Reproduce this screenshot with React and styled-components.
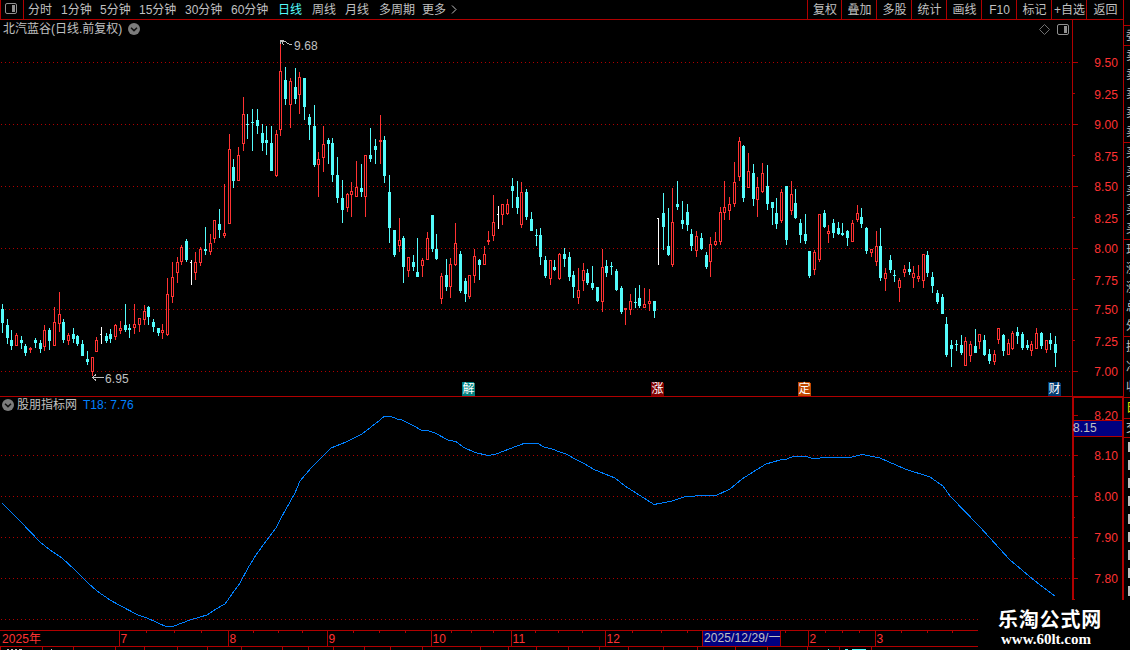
import React from 'react';
import styled, { createGlobalStyle } from 'styled-components';

const RED = '#b00000';
const UP = '#ff3232';
const DOWN = '#54fcfc';
const FONT = '"Liberation Sans", "Noto Sans CJK SC", sans-serif';

const periods = [
    ['分时', 33], ['1分钟', 39], ['5分钟', 39], ['15分钟', 46], ['30分钟', 46], ['60分钟', 47],
    ['日线', 34], ['周线', 33], ['月线', 34], ['多周期', 43], ['更多', 29],
];
const tools = ['复权', '叠加', '多股', '统计', '画线', 'F10', '标记', '+自选', '返回'];

// x, kind (r up, c down, w flat), high, body top, body bottom, low
const candles = [
    [2,'c',304,309,323,333],[7,'c',319,325,338,344],[11,'c',330,340,346,350],[16,'r',333,335,346,346],
    [21,'c',336,340,343,349],[25,'c',344,346,353,356],[30,'r',347,348,350,353],[35,'c',338,340,343,348],
    [40,'c',340,343,349,353],[44,'r',325,330,347,351],[49,'c',328,330,341,350],[54,'r',307,322,346,346],
    [59,'r',292,314,324,332],[63,'c',319,322,340,343],[68,'r',333,335,341,345],[73,'c',328,334,339,343],
    [77,'c',335,336,344,346],[82,'c',340,344,356,356],[87,'c',351,359,362,365],[92,'r',357,357,372,376],
    [96,'r',337,340,352,352],[101,'w',327,334,335,344],[106,'c',333,336,341,343],[110,'c',329,334,339,343],
    [115,'r',324,325,337,340],[120,'r',321,328,331,334],[125,'c',304,325,330,332],[129,'c',324,328,330,338],
    [134,'r',304,324,328,334],[139,'r',318,318,325,332],[144,'r',305,311,320,325],[148,'c',306,307,317,325],
    [153,'c',319,322,327,332],[158,'c',328,328,333,336],[162,'r',324,330,333,339],[167,'r',278,294,335,336],
    [172,'r',262,277,297,303],[177,'r',257,262,273,283],[181,'r',245,247,262,265],[186,'c',239,241,260,262],
    [191,'w',260,262,263,285],[195,'r',252,262,273,280],[200,'r',247,249,263,266],
    [205,'c',227,249,251,255],[210,'r',234,243,252,255],[214,'r',220,220,239,243],[219,'c',209,224,230,238],
    [224,'r',184,233,236,238],[229,'r',134,149,224,224],[233,'c',159,167,181,188],[238,'r',147,155,181,181],
    [243,'r',97,114,144,151],[247,'c',114,124,125,139],[252,'c',109,122,123,151],[257,'c',109,120,126,134],
    [262,'c',124,133,143,151],[266,'c',126,140,143,155],[271,'c',126,143,171,171],[276,'r',130,134,176,177],
    [280,'r',43,71,130,136],[285,'c',67,80,99,105],[290,'r',78,81,105,128],[295,'c',68,87,99,104],
    [299,'r',72,77,95,114],[304,'c',78,78,107,120],[309,'c',114,117,125,140],[314,'c',105,126,165,167],
    [318,'r',152,159,165,197],[323,'r',126,144,158,172],[328,'c',138,140,144,164],[332,'c',138,143,175,182],
    [337,'c',157,175,198,203],[342,'c',180,198,210,223],[347,'r',193,194,208,212],[351,'r',182,191,195,217],
    [356,'r',161,187,197,197],[361,'c',164,188,192,197],[365,'r',155,155,197,217],[370,'c',128,155,159,162],
    [375,'c',139,146,150,164],[380,'r',115,140,142,164],[384,'c',136,140,176,183],[389,'c',175,192,228,243],
    [394,'c',230,230,255,257],[399,'r',218,240,246,252],[403,'c',236,238,267,283],[408,'r',257,257,271,277],
    [413,'c',255,262,267,271],[417,'c',238,272,277,277],[422,'r',258,260,266,277],[427,'r',232,238,260,260],
    [432,'c',215,215,249,252],[436,'c',234,249,259,260],[441,'r',273,276,299,304],[446,'c',259,275,287,291],
    [450,'r',258,264,287,298],[455,'r',223,243,265,266],[460,'c',251,254,291,293],[465,'c',278,281,294,302],
    [469,'r',275,275,297,299],[474,'r',249,256,276,283],[479,'c',259,260,265,280],[484,'r',246,254,265,265],
    [488,'r',231,240,242,245],[493,'r',195,222,236,241],[498,'w',206,214,215,229],[502,'r',204,204,215,225],
    [507,'r',199,204,214,215],[512,'c',178,186,191,208],[517,'c',181,197,208,214],[521,'r',182,192,225,228],
    [526,'c',189,192,217,220],[531,'c',212,219,231,231],[536,'c',229,235,236,246],[540,'c',228,235,257,265],
    [545,'c',256,260,276,278],[550,'r',260,260,279,285],[554,'c',260,267,270,271],[559,'r',253,254,279,280],
    [564,'c',248,254,259,267],[569,'c',252,257,277,281],[573,'c',271,275,287,298],[578,'r',268,290,298,304],
    [583,'r',263,270,281,291],[587,'c',269,273,283,285],[592,'c',266,283,288,290],[597,'c',287,287,301,302],
    [602,'r',249,267,302,312],[606,'c',260,266,273,277],[611,'c',262,266,267,275],[616,'c',269,271,290,291],
    [621,'c',286,288,312,314],[625,'r',308,308,310,325],[630,'r',294,301,310,315],[635,'c',288,302,303,308],
    [639,'c',285,298,306,308],[644,'r',288,304,308,308],[649,'r',289,301,304,311],[654,'c',301,301,311,318],
    [658,'w',218,218,219,265],[663,'c',193,213,227,250],[668,'c',208,246,255,256],[672,'r',188,222,265,267],
    [677,'c',181,204,207,210],[682,'c',201,220,224,229],[687,'c',204,212,225,231],[691,'c',229,234,246,251],
    [696,'r',231,236,251,257],[701,'c',233,238,249,250],[706,'c',252,255,267,269],[710,'r',237,244,262,277],
    [715,'r',232,241,245,246],[720,'r',207,212,242,245],[724,'r',181,207,213,220],[729,'r',197,204,211,220],
    [734,'r',162,182,204,207],[739,'r',137,141,177,181],[743,'c',145,146,198,202],[748,'r',153,171,188,188],
    [753,'c',164,173,199,206],[757,'r',177,187,200,217],[762,'r',163,173,192,193],[767,'c',165,186,204,210],
    [772,'c',202,202,208,225],[776,'c',198,213,224,229],[781,'r',189,192,221,223],[786,'c',186,186,240,245],
    [791,'r',181,194,211,215],[795,'c',189,203,218,219],[800,'c',219,223,235,243],[805,'c',214,234,241,244],
    [809,'c',251,251,276,278],[814,'r',250,252,270,275],[819,'r',214,214,260,262],[824,'c',210,213,227,228],
    [828,'r',225,231,234,243],[833,'c',219,223,233,238],[838,'c',222,228,234,235],[842,'c',223,233,235,236],
    [847,'c',230,231,238,246],[852,'r',220,223,242,242],[857,'r',205,213,220,222],[861,'c',208,217,224,228],
    [866,'c',227,228,251,254],[871,'r',249,249,253,257],[876,'r',231,246,262,266],[880,'c',228,246,278,281],
    [885,'r',268,273,279,291],[890,'c',255,260,270,273],[894,'c',270,275,276,282],[899,'r',278,280,288,302],
    [904,'r',265,269,273,277],[909,'c',262,269,272,275],[913,'r',266,273,278,288],[918,'r',265,276,279,282],
    [923,'r',254,254,281,288],[927,'c',251,255,273,277],[932,'c',272,277,286,293],[937,'c',290,293,302,304],
    [942,'c',294,297,314,314],[946,'c',317,324,355,357],[951,'c',340,345,349,367],[956,'c',340,344,345,351],
    [961,'c',335,345,353,355],[965,'r',337,341,366,366],[970,'r',341,344,356,362],[975,'c',329,346,353,353],
    [979,'r',334,334,342,349],[984,'c',335,340,355,356],[989,'c',349,354,361,364],[994,'r',350,354,362,365],
    [998,'r',328,328,340,344],[1003,'c',334,335,351,356],[1008,'r',339,343,355,355],[1012,'r',331,333,349,350],
    [1017,'c',327,332,336,344],[1022,'c',332,334,348,350],[1027,'c',340,345,348,350],[1031,'r',341,344,351,356],
    [1036,'r',328,333,349,349],[1041,'c',332,333,346,349],[1046,'r',340,340,350,353],[1050,'c',333,340,344,350],
    [1055,'c',336,344,353,367],
];

const curve = [
    [2,503],[20,521],[40,542],[50,550],[62,558],[75,570],[88,583],[97,591],[110,600],[119,605],[138,615],[147,618],[167,627],
    [174,626],[190,620],[207,615],[216,609],[225,604],[232,594],[240,583],[248,568],[256,555],[266,541],[276,528],
    [281,518],[290,502],[295,493],[300,481],[306,474],[312,467],[322,457],[331,448],[346,442],[362,434],[380,420],
    [384,416.5],[391,416.5],[397,419],[402,420],[413,425.5],
    [421,430],[428,430.5],[435,433],[448,440],[456,441.5],[463,447],[475,452.5],[488,455.5],[496,454],
    [504,451],[517,446],[524,443.5],[538,443.5],[544,447],[552,449],[560,452],[567,454.5],[575,459],
    [584,463.5],[594,469.5],[605,474],[615,478],[625,486],[654,504.5],[672,501],[684,497],[700,495.5],
    [715,496],[730,489],[742,479],[757,469.5],[766,464],[773,462],[780,460],[787,459],[793,456.5],[807,456.5],
    [813,459],[820,458],[850,457.5],[862,454.5],[880,458],[905,469],[930,477],[943,486],[950,496],[980,527],
    [1010,560],[1035,581],[1055,596],
];

const priceScale = [
    ['9.50', 62], ['9.25', 93], ['9.00', 124], ['8.75', 155], ['8.50', 186], ['8.25', 217],
    ['8.00', 248], ['7.75', 279], ['7.50', 309], ['7.25', 340], ['7.00', 371],
];
const lineScale = [['8.20', 415], ['8.10', 455], ['8.00', 496], ['7.90', 537], ['7.80', 578]];
const badges = [['解', 462, '#008080'], ['涨', 651, '#800000'], ['定', 798, '#c04800'], ['财', 1048, '#003a70']];

const months = [['2025年', 0], ['7', 119], ['8', 228], ['9', 327], ['10', 431], ['11', 511], ['12', 605], ['2', 808], ['3', 875]];
const weekTicks = [146, 174, 201, 253, 278, 302, 353, 379, 405, 451, 471, 493, 535, 558, 582, 632, 661, 687, 785, 825, 842, 859, 901, 927, 952];
const footTicks = [0, 42, 73, 115, 144, 177, 207, 241, 282, 308, 333, 364, 390, 422, 480, 508, 536, 568, 599, 628, 663, 697, 735, 767, 807, 839, 871];

const sideRows = [
    [25, ''], [19, '委'], [96, '卖卖卖卖卖'], [96, '买买买买买'], [96, '现涨涨总外'], [60, '换净收'], [20, '日'], [18, '交'],
];

const Candle = ({ data }) => {
    const [x, kind, high, top, bottom, low] = data;
    if (kind === 'w') {
        return (
            <g fill="#fff">
                <rect x={x} y={high} width="1" height={low - high} />
                <rect x={x - 1} y={top} width="1" height="1" />
            </g>
        );
    }
    const color = kind === 'r' ? UP : DOWN;
    return (
        <g fill={color}>
            <rect x={x} y={high} width="1" height={low - high} />
            <rect x={x - 1} y={top} width="3" height={bottom - top} />
            {kind === 'r' && bottom - top > 2 && (
                <rect x={x} y={top + 1} width="1" height={bottom - top - 2} fill="#000" />
            )}
        </g>
    );
};

const Grid = ({ y }) => (
    <line x1="1" x2="1072" y1={y + 0.5} y2={y + 0.5} stroke={RED} strokeDasharray="1 3" />
);

const PriceChart = () => (
    <Chart width="1123" height="377" viewBox="0 20 1123 377" shapeRendering="crispEdges">
        {priceScale.filter((p, i) => i % 2 === 0).map(([label, y]) => <Grid key={label} y={y} />)}
        {candles.map(c => <Candle key={c[0]} data={c} />)}
        <path d="M280.5 44V40.5H284M281 41.5H285L288 43.5L292 45M282 42.5L284 45" stroke="#c0c0c0" fill="none" />
        <path d="M92.5 377.5H104M92.5 377.5L96 374.5M92.5 377.5L96 380.5" stroke="#c0c0c0" fill="none" />
        <Label x="294" y="50">9.68</Label>
        <Label x="105" y="383">6.95</Label>
        {badges.map(([text, x, color]) => (
            <g key={text}>
                <path d={`M${x} 382h12v1h1v13h-13z`} fill={color} />
                <Label x={x + 0.5} y="393" fill="#fff">{text}</Label>
            </g>
        ))}
        <rect x="1072" y="20" width="1" height="377" fill={RED} />
        <rect x="0" y="396" width="1123" height="1" fill={RED} />
        {priceScale.map(([label, y], i) => (
            <g key={label}>
                <rect x="1073" y={y} width={i % 2 ? 2 : 5} height="1" fill={RED} />
                <Label x="1118" y={y + 5 + (i % 2 ? 1 : 0)} fill={UP} textAnchor="end">{label}</Label>
            </g>
        ))}
    </Chart>
);

const LineChart = () => (
    <Chart width="1123" height="233" viewBox="0 397 1123 233" shapeRendering="crispEdges">
        {[455, 496, 537, 578, 619].map(y => <Grid key={y} y={y} />)}
        <polyline points={curve.map(p => p.join(',')).join(' ')} fill="none" stroke="#0080ff" />
        <rect x="1072" y="397" width="2" height="203" fill={RED} />
        <rect x="1122" y="397" width="1" height="203" fill={RED} />
        <rect x="1072" y="397" width="51" height="1" fill={RED} />
        {lineScale.map(([label, y]) => (
            <g key={label}>
                <rect x="1074" y={y} width="4" height="1" fill={RED} />
                <Label x="1118" y={y + 5} fill={UP} textAnchor="end">{label}</Label>
            </g>
        ))}
        {[476, 517, 558, 599].map(y => <rect key={y} x="1074" y={y} width="1" height="1" fill={RED} />)}
        <rect x="1074" y="420" width="48" height="17" fill={RED} />
        <rect x="1074" y="421" width="48" height="15" fill="#000080" />
        <Label x="1073" y="432">8.15</Label>
    </Chart>
);

const DateAxis = () => (
    <Chart width="1123" height="20" viewBox="0 630 1123 20" shapeRendering="crispEdges">
        <rect x="0" y="630" width="1123" height="1" fill={RED} />
        <rect x="0" y="646" width="1123" height="1" fill={RED} />
        {weekTicks.map(x => <rect key={x} x={x} y="631" width="1" height="2" fill={RED} />)}
        {footTicks.map(x => <rect key={x} x={x} y="647" width="1" height="3" fill={RED} />)}
        {months.map(([label, x]) => (
            <g key={label}>
                {x > 0 && <rect x={x} y="631" width="1" height="15" fill={RED} />}
                <Label x={x + (x ? 1.5 : 2)} y="643" fill={UP}>{label}</Label>
            </g>
        ))}
        <rect x="702" y="631" width="79" height="15" fill={RED} />
        <rect x="703" y="631" width="77" height="15" fill="#000080" />
        <Label x="704" y="642">2025/12/29/一</Label>
        <path d="M7 649.5h2m2 0h2m2 0h2m2 0h3m29 0h1" stroke="#c0c0c0" />
        <path d="M828 649.5h1m16 0h3m4 0h14" stroke={DOWN} />
    </Chart>
);

const RoundArrow = () => (
    <svg width="12" height="12" viewBox="0 0 12 12">
        <circle cx="6" cy="6" r="6" fill="#7c7c7c" />
        <path d="M3 4.8L6 7.6L9 4.8" stroke="#111" strokeWidth="1.5" fill="none" />
    </svg>
);

const PanelIcon = () => (
    <svg width="12" height="11" viewBox="0 0 12 11">
        <rect x="0.5" y="0.5" width="11" height="10" rx="1.5" stroke="#909090" fill="none" />
        <rect x="7" y="2" width="3" height="7" fill="#909090" />
    </svg>
);

export default function App() {
    return (
        <Screen>
            <GlobalStyle />
            <Main>
                <Toolbar>
                    <IconCell><PanelIcon /></IconCell>
                    {periods.map(([label, width]) => (
                        <Period key={label} $width={width} $active={label === '日线'}>{label}</Period>
                    ))}
                    <svg width="6" height="9" viewBox="0 0 6 9"><path d="M1 0.5L5 4.5L1 8.5" stroke="#c0c0c0" fill="none" /></svg>
                    <Tools>
                        {tools.map((label, i) => <Tool key={label} $width={i === 0 ? 34 : i === 8 ? 37 : 35}>{label}</Tool>)}
                    </Tools>
                </Toolbar>
                <Panel>
                    <Title $left={3}>
                        北汽蓝谷(日线.前复权)<RoundArrow />
                    </Title>
                    <PanelTools>
                        <svg width="11" height="11" viewBox="0 0 11 11"><path d="M5.5 0.5L10.5 5.5L5.5 10.5L0.5 5.5Z" stroke="#707070" fill="none" /></svg>
                        <PanelIcon />
                    </PanelTools>
                    <PriceChart />
                </Panel>
                <Panel>
                    <Title $left={2} $top={-1} $gap={3}>
                        <RoundArrow />股朋指标网<Value>T18: 7.76</Value>
                    </Title>
                    <LineChart />
                </Panel>
                <DateAxis />
            </Main>
            <Side>
                {sideRows.map(([height, text], i) => (
                    <SideBlock key={i} $height={height} $color={text === '日' ? '#e8e800' : '#c0c0c0'}>
                        {text.split('').map((t, j) => <span key={j}>{t}</span>)}
                    </SideBlock>
                ))}
                <Times>
                    {[0, 1, 2, 3, 4, 5, 6, 7, 8].map(i => <i key={i} />)}
                </Times>
            </Side>
            <Watermark>
                <strong>乐淘公式网</strong>
                <span>www.60lt.com</span>
            </Watermark>
        </Screen>
    );
}

const GlobalStyle = createGlobalStyle`
    body {
        margin: 0;
        background: #000;
        overflow: hidden;
    }
`
const Screen = styled.div`
    position: relative;
    display: flex;
    width: 1130px;
    height: 650px;
    overflow: hidden;
    background: #000;
    color: #c0c0c0;
    font: 12px/18px ${FONT};
`
const Main = styled.div`
    width: 1123px;
    flex-shrink: 0;
`
const Toolbar = styled.div`
    display: flex;
    align-items: center;
    box-sizing: border-box;
    height: 20px;
    border-bottom: 1px solid ${RED};
    white-space: nowrap;
`
const IconCell = styled.div`
    display: flex;
    align-items: center;
    box-sizing: border-box;
    width: 24px;
    height: 19px;
    margin-right: 4px;
    padding: 0 0 2px 4px;
    border-left: 1px solid ${RED};
    border-right: 1px solid ${RED};
`
const Period = styled.div`
    width: ${props => props.$width}px;
    color: ${props => props.$active ? DOWN : '#c0c0c0'};
`
const Tools = styled.div`
    display: flex;
    margin-left: auto;
`
const Tool = styled.div`
    box-sizing: border-box;
    width: ${props => props.$width}px;
    height: 19px;
    padding-left: 1px;
    border-left: 1px solid ${RED};
    line-height: 20px;
    text-align: center;
`
const Panel = styled.div`
    position: relative;
`
const Chart = styled.svg`
    display: block;
`
const Label = styled.text.attrs(props => ({ fill: props.fill || '#c0c0c0' }))`
    font: 12px ${FONT};
    letter-spacing: 0.1px;
`
const Title = styled.div`
    position: absolute;
    top: ${props => props.$top || 0}px;
    left: ${props => props.$left}px;
    display: flex;
    align-items: center;
    gap: ${props => props.$gap || 6}px;
    height: 18px;
    line-height: 20px;
`
const Value = styled.span`
    margin-left: 3px;
    color: #0080ff;
`
const PanelTools = styled.div`
    position: absolute;
    top: 4px;
    right: 54px;
    display: flex;
    gap: 7px;
`
const Side = styled.div`
    box-sizing: border-box;
    width: 7px;
    height: 650px;
    overflow: hidden;
    border-left: 1px solid ${RED};
`
const SideBlock = styled.div`
    display: flex;
    flex-direction: column;
    justify-content: space-around;
    height: ${props => props.$height}px;
    padding-left: 2px;
    border-bottom: 1px solid ${RED};
    color: ${props => props.$color};
    span {
        width: 12px;
        line-height: 16px;
    }
`
const Times = styled.div`
    display: flex;
    flex-direction: column;
    gap: 8px;
    padding: 4px 0 0 4px;
    i {
        width: 2px;
        height: 10px;
        background: #c0c0c0;
    }
`
const Watermark = styled.div`
    position: absolute;
    right: 0;
    bottom: 0;
    display: flex;
    flex-direction: column;
    box-sizing: border-box;
    width: 152px;
    height: 50px;
    padding: 7px 0 0 20px;
    background: #000;
    color: #fff;
    strong {
        font: bold 20px/24px "Noto Sans CJK SC", sans-serif;
        letter-spacing: 0.8px;
    }
    span {
        padding-left: 3px;
        font: bold 15px/16px "Liberation Serif", serif;
    }
`
